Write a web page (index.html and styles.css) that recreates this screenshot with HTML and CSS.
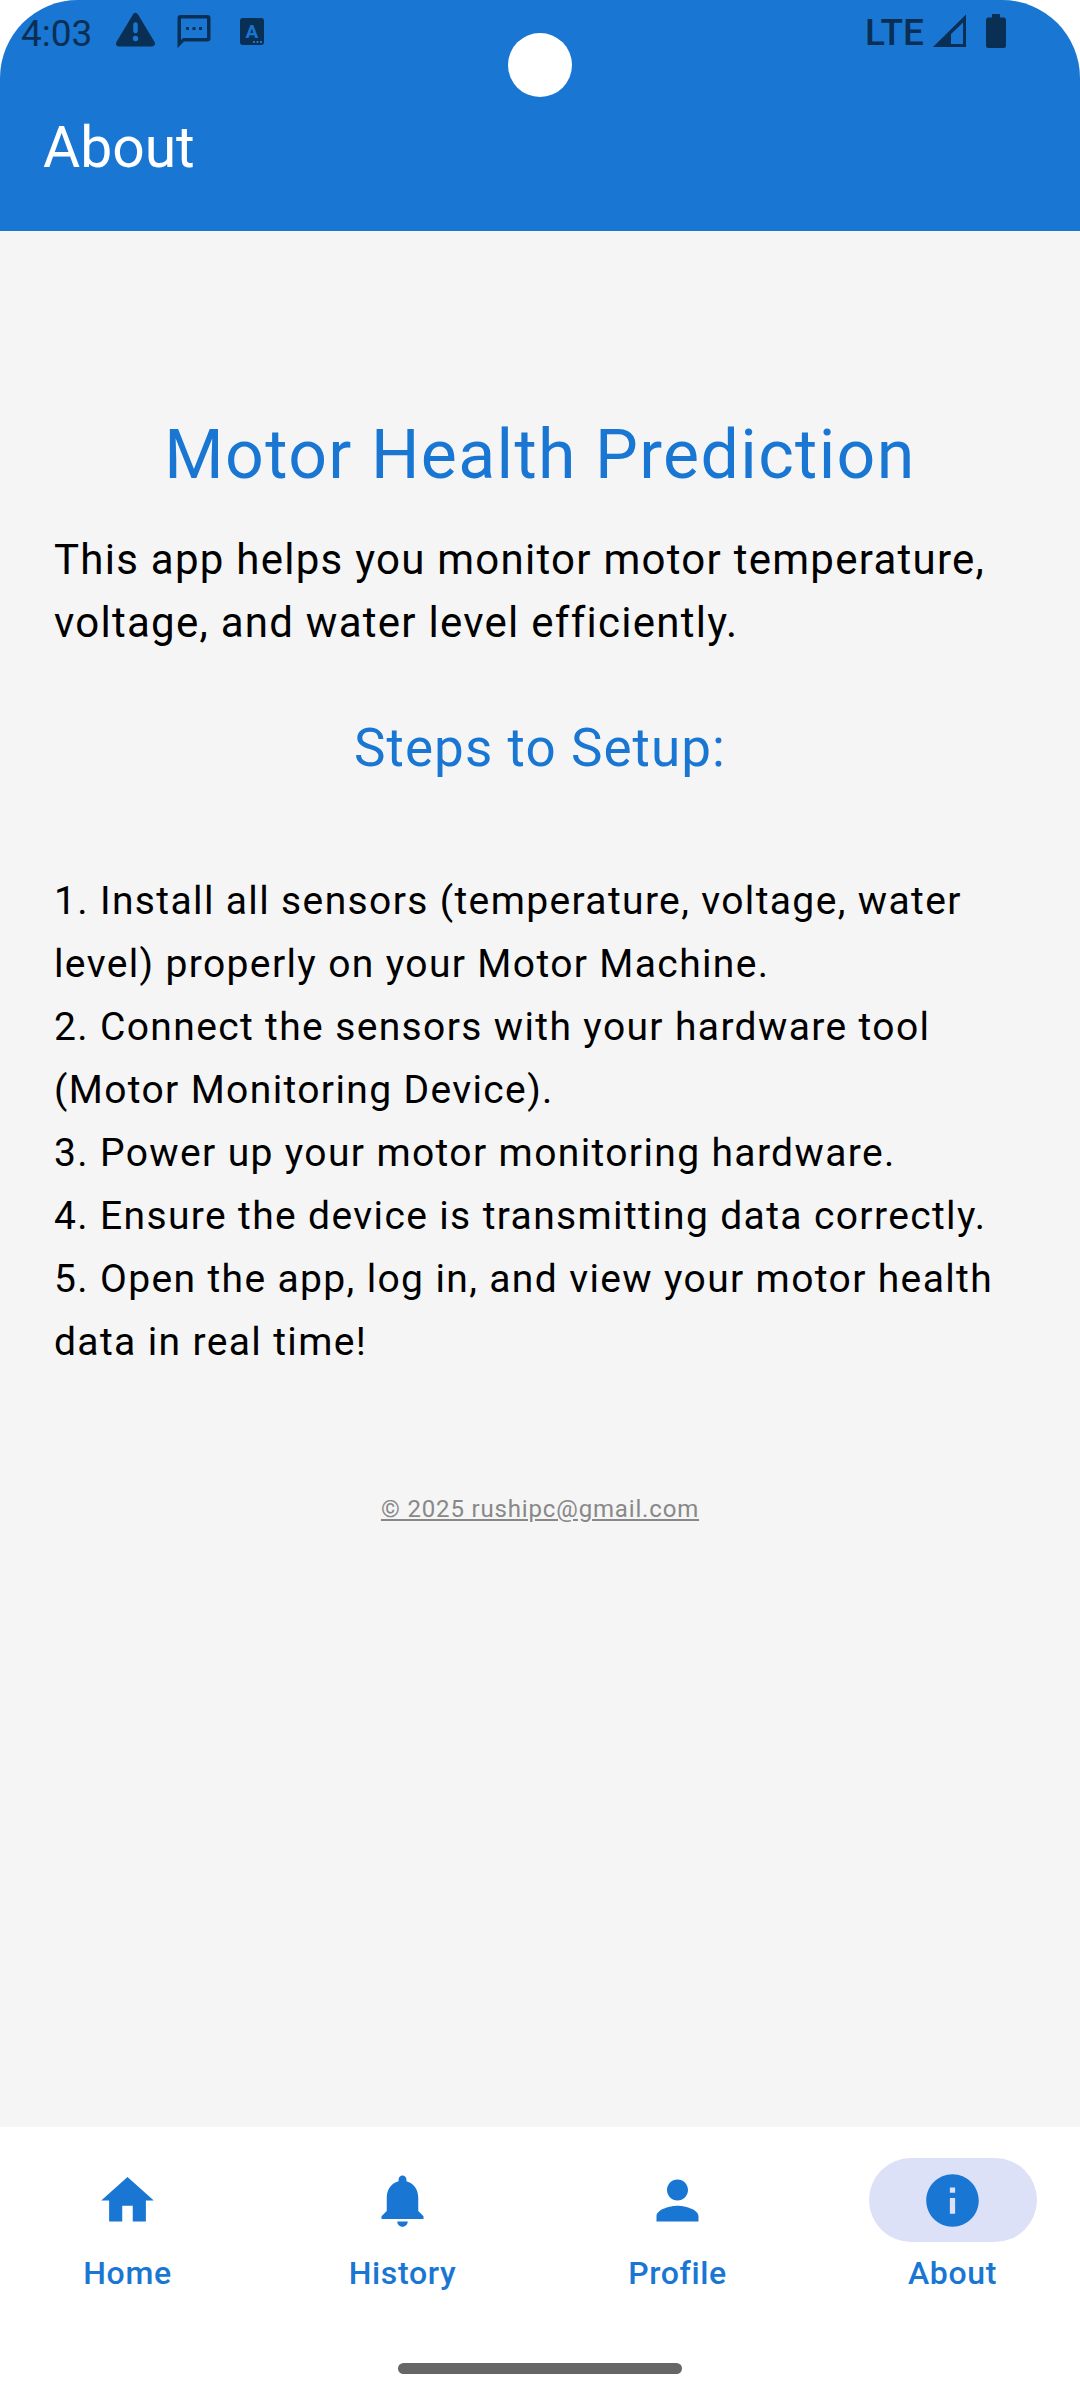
FILE: index.html
```html
<!DOCTYPE html>
<html lang="en">
<head>
<meta charset="utf-8">
<meta name="viewport" content="width=device-width, initial-scale=1">
<title>About</title>
<link rel="stylesheet" href="styles.css">
</head>
<body>
<header class="app-header">
  <div class="status-bar">
    <div class="status-left">
      <span class="clock">4:03</span>
      <svg class="status-icon" viewBox="0 0 40 40" aria-hidden="true">
        <path d="M19.5 5 36 32.5H3z" fill="currentColor" stroke="currentColor" stroke-width="6" stroke-linejoin="round"/>
        <path d="M19.5 13.5V20" stroke="#1976d2" stroke-width="4.5" stroke-linecap="round"/>
        <circle cx="19.5" cy="27.5" r="2.7" fill="#1976d2"/>
      </svg>
      <svg class="status-icon" viewBox="0 0 40 40" aria-hidden="true">
        <path fill="currentColor" fill-rule="evenodd" d="M6.5 4h27a3 3 0 0 1 3 3v20.5a3 3 0 0 1-3 3H10L3.5 37V7a3 3 0 0 1 3-3zM7 7.5V29l2-2h24V7.5z"/>
        <path fill="currentColor" d="M12 16h3v3h-3zM18.5 16h3v3h-3zM25 16h3v3h-3z"/>
      </svg>
      <svg class="status-icon" viewBox="0 0 40 40" aria-hidden="true">
        <rect x="8" y="7" width="24" height="27" rx="3" fill="currentColor"/>
        <text class="badge-letter" x="20" y="27" text-anchor="middle">A</text>
        <path fill="#1976d2" d="M21 30h2v2h-2zM24.5 30h2v2h-2zM28 30h2v2h-2z"/>
      </svg>
    </div>
    <div class="status-right">
      <span class="network">LTE</span>
      <svg class="status-icon" viewBox="0 0 40 40" aria-hidden="true">
        <path fill="currentColor" fill-rule="evenodd" d="M36 3.5V36H3zM33 11.5 21 23v10h12z"/>
      </svg>
      <svg class="status-icon" viewBox="0 0 40 40" aria-hidden="true">
        <path fill="currentColor" d="M16 3h8v3.5h3.5a2.500 2.500 0 0 1 2.500 2.500v25.500a2.500 2.500 0 0 1-2.500 2.500h-15a2.500 2.500 0 0 1-2.500-2.500V9a2.500 2.500 0 0 1 2.500-2.500H16z"/>
      </svg>
    </div>
    <span class="camera"></span>
  </div>
  <h1 class="title">About</h1>
</header>

<main class="content">
  <h2 class="app-name">Motor Health Prediction</h2>
  <p class="intro">This app helps you monitor motor temperature, voltage, and water level efficiently.</p>
  <h3 class="steps-title">Steps to Setup:</h3>
  <ol class="steps">
    <li>1. Install all sensors (temperature, voltage, water level) properly on your Motor Machine.</li>
    <li>2. Connect the sensors with your hardware tool (Motor Monitoring Device).</li>
    <li>3. Power up your motor monitoring hardware.</li>
    <li>4. Ensure the device is transmitting data correctly.</li>
    <li>5. Open the app, log in, and view your motor health data in real time!</li>
  </ol>
  <a class="contact" href="mailto:rushipc@gmail.com">© 2025 rushipc@gmail.com</a>
</main>

<footer class="bottom">
  <nav class="tabs">
    <a class="tab" href="#home">
      <span class="pill"><svg class="tab-icon" viewBox="0 0 24 24" aria-hidden="true"><path d="M10 20v-6h4v6h5v-8h3L12 3 2 12h3v8z"/></svg></span>
      <span class="label">Home</span>
    </a>
    <a class="tab" href="#history">
      <span class="pill"><svg class="tab-icon" viewBox="0 0 24 24" aria-hidden="true"><path d="M12 22c1.100 0 2-.9 2-2h-4c0 1.100.89 2 2 2zm6-6v-5c0-3.070-1.640-5.640-4.500-6.320V4c0-.83-.67-1.500-1.500-1.500s-1.500.67-1.500 1.500v.68C7.630 5.360 6 7.920 6 11v5l-2 2v1h16v-1l-2-2z"/></svg></span>
      <span class="label">History</span>
    </a>
    <a class="tab" href="#profile">
      <span class="pill"><svg class="tab-icon" viewBox="0 0 24 24" aria-hidden="true"><path d="M12 12c2.210 0 4-1.790 4-4s-1.790-4-4-4-4 1.790-4 4 1.790 4 4 4zm0 2c-2.670 0-8 1.340-8 4v2h16v-2c0-2.660-5.330-4-8-4z"/></svg></span>
      <span class="label">Profile</span>
    </a>
    <a class="tab" href="#about" aria-current="page">
      <span class="pill pill-active"><svg class="tab-icon" viewBox="0 0 24 24" aria-hidden="true"><path d="M12 2C6.480 2 2 6.480 2 12s4.480 10 10 10 10-4.480 10-10S17.520 2 12 2zm1 15h-2v-6h2v6zm0-8h-2V7h2v2z"/></svg></span>
      <span class="label">About</span>
    </a>
  </nav>
  <div class="gesture-bar"></div>
</footer>
</body>
</html>
```
FILE: styles.css
```css
* {
  box-sizing: border-box;
}

body {
  margin: 0;
  min-height: 100vh;
  display: flex;
  flex-direction: column;
  background: #fff;
  color: #000;
  font-family: Roboto, "Liberation Sans", sans-serif;
}

h1, h2, h3, p, ol {
  margin: 0;
  padding: 0;
  font-weight: 400;
}

/* Header */
.app-header {
  position: relative;
  padding: 11px 0 49px;
  background: #1976d2;
  border-radius: 78px 78px 0 0;
  overflow: hidden;
}

.status-bar {
  display: flex;
  justify-content: space-between;
  padding: 0 64px 0 21px;
  color: #0a2f54;
  font-size: 37px;
  line-height: 44px;
}

.status-left,
.status-right {
  display: flex;
  align-items: flex-start;
  height: 40px;
}

.status-left {
  gap: 18px;
}

.clock {
  padding-right: 6px;
  line-height: 46px;
}

.status-right {
  gap: 6px;
}

.network {
  font-weight: 500;
}

.status-icon {
  width: 40px;
  height: 40px;
}

.badge-letter {
  fill: #1976d2;
  font-size: 19px;
  font-weight: 700;
}

.camera {
  position: absolute;
  top: 33px;
  left: 50%;
  width: 64px;
  height: 64px;
  margin-left: -32px;
  border-radius: 50%;
  background: #fff;
}

.title {
  margin-top: 63px;
  padding: 0 43px;
  color: #fff;
  font-size: 57px;
  line-height: 68px;
}

/* Content */
.content {
  flex: 1;
  display: flex;
  flex-direction: column;
  padding: 184px 54px 64px;
  background: #f5f5f5;
}

.app-name {
  color: #1976d2;
  font-size: 68px;
  line-height: 80px;
  letter-spacing: 0.02em;
  text-align: center;
}

.intro {
  margin-top: 33px;
  font-size: 42px;
  line-height: 63px;
  letter-spacing: 0.03em;
}

.steps-title {
  margin-top: 63px;
  color: #1976d2;
  font-size: 53px;
  line-height: 62px;
  letter-spacing: 0.02em;
  text-align: center;
}

.steps {
  margin-top: 91px;
  list-style: none;
  font-size: 39px;
  line-height: 63px;
  letter-spacing: 0.035em;
}

.contact {
  align-self: center;
  margin-top: 121px;
  color: #888;
  font-size: 24px;
  line-height: 28px;
  letter-spacing: 0.035em;
}

/* Bottom navigation */
.bottom {
  padding: 31px 0 26px;
  background: #fff;
}

.tabs {
  display: flex;
  gap: 20px;
}

.tab {
  flex: 1;
  display: flex;
  flex-direction: column;
  align-items: center;
  gap: 12px;
  color: #1976d2;
  text-decoration: none;
}

.pill {
  display: flex;
  align-items: center;
  justify-content: center;
  width: 168px;
  height: 84px;
  border-radius: 42px;
}

.pill-active {
  background: #dde1f8;
}

.tab-icon {
  width: 63px;
  height: 63px;
  fill: currentColor;
}

.label {
  font-size: 32px;
  font-weight: 500;
  line-height: 38px;
  letter-spacing: 0.02em;
}

.gesture-bar {
  width: 284px;
  height: 11px;
  margin: 71px auto 0;
  border-radius: 6px;
  background: #666;
}
```
